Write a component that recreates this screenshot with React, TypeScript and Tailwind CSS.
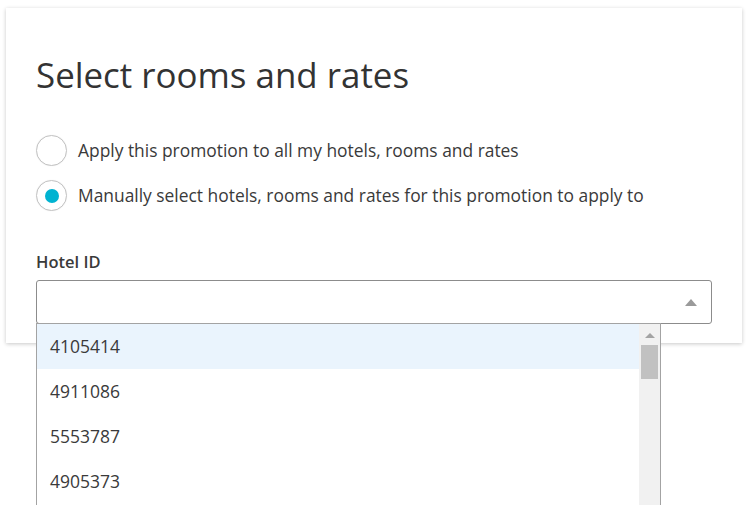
import React from "react";

const hotelIds = ["4105414", "4911086", "5553787", "4905373"];

const Radio = ({ checked, label }: { checked?: boolean; label: string }) => (
  <label className="flex items-center gap-[11px] h-[45px] cursor-pointer">
    <span className="w-[31px] h-[31px] rounded-full border border-[#c4c4c4] bg-white flex items-center justify-center shadow-[0_0_1px_rgba(0,0,0,0.1)]">
      {checked && <span className="w-[14px] h-[14px] rounded-full bg-[#00b3d1]" />}
    </span>
    <span className="text-[17.4px] text-[#3a3a3a]">{label}</span>
  </label>
);

const App = () => {
  return (
    <div
      className="h-[505px] w-[747px] overflow-hidden bg-white pt-[8px] pl-[6px]"
      style={{ fontFamily: '"Open Sans", "Liberation Sans", sans-serif' }}
    >
      <div className="w-[736px] h-[335px] bg-white shadow-[0_1px_4px_rgba(0,0,0,0.22)] px-[30px] pt-[42px]">
        <h1 className="text-[34.9px] leading-[50px] text-[#333] font-normal">
          Select rooms and rates
        </h1>

        <div className="mt-[28px] flex flex-col">
          <Radio label="Apply this promotion to all my hotels, rooms and rates" />
          <Radio checked label="Manually select hotels, rooms and rates for this promotion to apply to" />
        </div>

        <div className="mt-[33px] text-[16.5px] font-semibold text-[#3a3a3a] leading-[22px]">
          Hotel ID
        </div>

        <div className="relative mt-[7px] w-[676px] h-[44px] border border-[#8c8c8c] rounded-[3px] bg-white">
          <span className="absolute right-[14px] top-[18px] w-0 h-0 border-l-[6px] border-r-[6px] border-b-[7px] border-l-transparent border-r-transparent border-b-[#9a9a9a]" />

          <div className="absolute left-[-1px] top-[42px] w-[625px] h-[190px] border border-[#a3a3a3] bg-white flex z-10">
            <ul className="flex-1">
              {hotelIds.map((id, i) => (
                <li
                  key={id}
                  className={
                    "h-[45px] flex items-center pl-[13px] text-[17.5px] text-[#3a3a3a] " +
                    (i === 0 ? "bg-[#eaf4fd]" : "bg-white")
                  }
                >
                  {id}
                </li>
              ))}
            </ul>
            <div className="w-[21px] bg-[#f1f1f1] flex flex-col items-center">
              <span className="mt-[9px] w-0 h-0 border-l-[5px] border-r-[5px] border-b-[5px] border-l-transparent border-r-transparent border-b-[#a3a3a3]" />
              <span className="mt-[7px] w-[17px] h-[34px] bg-[#c1c1c1]" />
            </div>
          </div>
        </div>
      </div>
    </div>
  );
};

export default App;
